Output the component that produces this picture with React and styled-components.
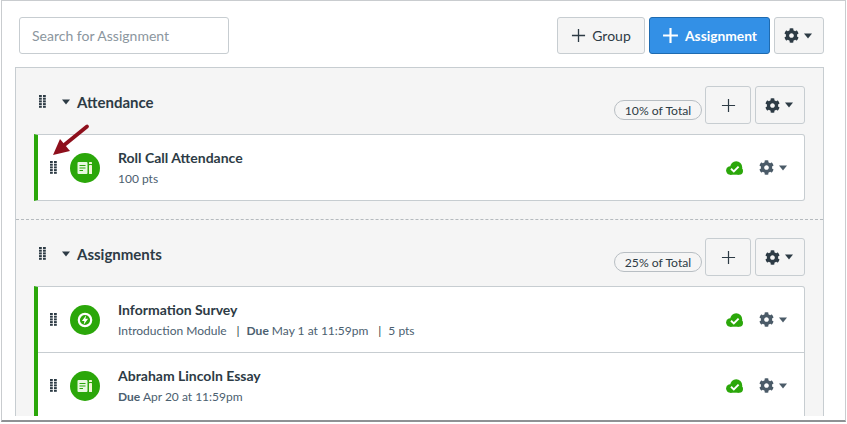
import React from "react";
import styled, { createGlobalStyle } from "styled-components";
import { FaCog } from "react-icons/fa";

const GlobalStyle = createGlobalStyle`
  html, body {
    margin: 0;
    background: #fff;
    font-family: Lato, "Noto Sans", sans-serif;
    color: #2d3b45;
  }
`;

const Plus = ({ size = 16, weight = 1.4 }) => (
  <svg width={size} height={size} viewBox="0 0 16 16">
    <path d="M8 1v14M1 8h14" stroke="currentColor" strokeWidth={weight} fill="none" />
  </svg>
);

const DragHandle = () => (
  <svg width="7" height="13" viewBox="0 0 7 13">
    {[0, 1, 2, 3, 4].map((r) =>
      [0, 1].map((c) => (
        <rect key={`${r}-${c}`} x={c * 4} y={r * 2.7} width="2.8" height="2" fill="#2d3b45" />
      ))
    )}
  </svg>
);

const Caret = ({ color = "#2d3b45" }) => (
  <svg width="8" height="6" viewBox="0 0 8 6">
    <path d="M0 .5h8L4 5.5z" fill={color} />
  </svg>
);

const AssignmentGlyph = () => (
  <svg width="16" height="14" viewBox="0 0 16 14">
    <rect x="0.5" y="1" width="10" height="12" rx="1" fill="#e8f8e0" />
    <path d="M2.5 4.5h6M2.5 7h6M2.5 9.5h3.5" stroke="#2ba70a" strokeWidth="1.1" />
    <rect x="12" y="4" width="3" height="9" rx="0.6" fill="#f1f7d8" />
    <rect x="12" y="1" width="3" height="2" rx="0.6" fill="#f1f7d8" />
  </svg>
);

const QuizGlyph = () => (
  <svg width="16" height="16" viewBox="0 0 16 16">
    <circle cx="8" cy="8" r="6.2" fill="none" stroke="#fff" strokeWidth="2.2" />
    <path d="M9.2 3.200 4.900 9h2.500l-.7 3.800 4.400-6H8.400z" fill="#fff" />
  </svg>
);

const Published = () => (
  <svg width="17" height="14" viewBox="0 0 17 14">
    <g fill="#2ba70a">
      <circle cx="10.200" cy="6.300" r="6" />
      <circle cx="4.300" cy="9.500" r="4.200" />
      <circle cx="13.300" cy="10" r="3.700" />
      <rect x="4" y="9" width="9" height="4.700" />
    </g>
    <path d="M5 7.800 7.800 10.400l4.800-4.800" stroke="#fff" strokeWidth="1.900" fill="none" />
  </svg>
);

const Arrow = () => (
  <ArrowWrap width="38" height="34" viewBox="0 0 38 34">
    <path d="M35 3.500 11 23" stroke="#8e0f1c" strokeWidth="3.800" strokeLinecap="round" fill="none" />
    <path d="M1 32 8 16 18 28z" fill="#8e0f1c" />
  </ArrowWrap>
);

const Row = ({ icon, title, children }) => (
  <ItemRow>
    <ItemHandle>
      <DragHandle />
    </ItemHandle>
    <IconCircle>{icon}</IconCircle>
    <ItemText>
      <ItemTitle>{title}</ItemTitle>
      <ItemMeta>{children}</ItemMeta>
    </ItemText>
    <PublishedSlot>
      <Published />
    </PublishedSlot>
    <RowGear>
      <FaCog size={15} />
      <Caret color="#4b5b68" />
    </RowGear>
  </ItemRow>
);

const Group = ({ name, weight, dashed, children }) => (
  <GroupBlock $dashed={dashed}>
    <GroupHeader>
      <GroupTitle>
        <DragHandle />
        <Caret />
        <GroupName>{name}</GroupName>
      </GroupTitle>
      <WeightPill>{weight} of Total</WeightPill>
      <SquareButton $width={46}>
        <Plus size={15} weight={1.3} />
      </SquareButton>
      <SquareButton $width={50} $gear>
        <FaCog size={15} />
        <Caret />
      </SquareButton>
    </GroupHeader>
    <ItemList>{children}</ItemList>
  </GroupBlock>
);

export default function App() {
  return (
    <>
      <GlobalStyle />
      <Page>
        <Window>
          <Toolbar>
            <SearchInput placeholder="Search for Assignment" readOnly />
            <ToolbarButtons>
              <SquareButton $width={88} $tall>
                <Plus size={15} />
                Group
              </SquareButton>
              <PrimaryButton>
                <Plus size={17} weight={2} />
                Assignment
              </PrimaryButton>
              <SquareButton $width={50} $tall $gear>
                <FaCog size={15} />
                <Caret />
              </SquareButton>
            </ToolbarButtons>
          </Toolbar>
          <Panel>
            <Group name="Attendance" weight="10%">
              <Row icon={<AssignmentGlyph />} title="Roll Call Attendance">
                100 pts
              </Row>
              <Arrow />
            </Group>
            <Group name="Assignments" weight="25%" dashed>
              <Row icon={<QuizGlyph />} title="Information Survey">
                Introduction Module<Sep>|</Sep>
                <b>Due</b>&nbsp;May 1 at 11:59pm<Sep>|</Sep>5 pts
              </Row>
              <Row icon={<AssignmentGlyph />} title="Abraham Lincoln Essay">
                <b>Due</b>&nbsp;Apr 20 at 11:59pm
              </Row>
            </Group>
          </Panel>
        </Window>
      </Page>
    </>
  );
}

const Page = styled.div`
  width: 847px;
  height: 424px;
  overflow: hidden;
  background: #fff;
`;

const Window = styled.div`
  box-sizing: border-box;
  width: 845px;
  height: 422px;
  margin-left: 1px;
  padding: 16px 20px 0 13px;
  overflow: hidden;
  background: #fff;
  border: 1px solid #c9cccf;
  border-bottom: 2px solid #8e9194;
`;

const Toolbar = styled.div`
  display: flex;
  justify-content: space-between;
  width: 805px;
  padding-left: 4px;
  margin-bottom: 13px;
`;

const SearchInput = styled.input`
  box-sizing: border-box;
  width: 210px;
  height: 37px;
  padding: 0 12px;
  border: 1px solid #c7cdd1;
  border-radius: 3px;
  outline: none;
  background: #fff;
  font: 14px Lato, sans-serif;
  color: #2d3b45;

  &::placeholder {
    color: #8b969e;
    opacity: 1;
  }
`;

const ToolbarButtons = styled.div`
  display: flex;
  gap: 4px;
`;

const SquareButton = styled.div`
  box-sizing: border-box;
  flex: none;
  display: flex;
  align-items: center;
  justify-content: center;
  gap: ${({ $gear }) => ($gear ? 5 : 6)}px;
  width: ${({ $width }) => $width}px;
  height: ${({ $tall }) => ($tall ? 37 : 38)}px;
  padding-right: ${({ $gear }) => ($gear ? 3 : 0)}px;
  background: #f5f5f5;
  border: 1px solid #c7cdd1;
  border-radius: 3px;
  font-size: 14px;
  color: #2d3b45;

  & + & {
    margin-left: ${({ $tall }) => ($tall ? 0 : 4)}px;
  }
`;

const PrimaryButton = styled.div`
  box-sizing: border-box;
  display: flex;
  align-items: center;
  justify-content: center;
  gap: 6px;
  width: 121px;
  height: 37px;
  background: #3390e6;
  border: 1px solid #1f6bb0;
  border-radius: 3px;
  font-size: 13.8px;
  font-weight: 700;
  color: #fff;
`;

/* the screenshot cuts the panel off just above the window's bottom edge */
const Panel = styled.div`
  box-sizing: border-box;
  width: 809px;
  height: 349px;
  overflow: hidden;
  background: #f5f5f5;
  border: 1px solid #c7cdd1;
  border-bottom: 0;
`;

const GroupBlock = styled.section`
  position: relative;
  padding: 18px 18px 18px;
  border-top: ${({ $dashed }) => ($dashed ? "1px dashed #b5babe" : "0")};
`;

const GroupHeader = styled.div`
  display: flex;
  align-items: center;
  height: 38px;
  margin-bottom: 10px;
`;

const GroupTitle = styled.div`
  flex: 1;
  display: flex;
  align-items: center;
  gap: 16px;
  padding: 0 0 7px 5px;
`;

const GroupName = styled.h2`
  margin: 0 0 0 -9px;
  font-size: 15px;
  font-weight: 700;
  color: #2d3b45;
`;

const WeightPill = styled.span`
  box-sizing: border-box;
  display: flex;
  align-items: center;
  justify-content: center;
  width: 88px;
  height: 20px;
  margin: 10px 3px 0 0;
  border: 1px solid #b8bec3;
  border-radius: 10px;
  font-size: 12.2px;
  color: #2d3b45;
`;

const ItemList = styled.div`
  background: #fff;
  border: 1px solid #c7cdd1;
  border-left: 4px solid #2ba70a;
  border-radius: 0 3px 3px 0;
`;

const ItemRow = styled.div`
  display: flex;
  align-items: center;
  height: 65px;

  & + & {
    border-top: 1px solid #c7cdd1;
  }
`;

const ItemHandle = styled.span`
  display: flex;
  margin: 0 13px 0 12px;
`;

const IconCircle = styled.span`
  flex: none;
  display: flex;
  align-items: center;
  justify-content: center;
  width: 30px;
  height: 30px;
  border-radius: 50%;
  background: #2ba70a;
`;

const ItemText = styled.div`
  flex: 1;
  margin-left: 18px;
`;

const ItemTitle = styled.div`
  font-size: 14px;
  font-weight: 700;
  line-height: 20px;
  color: #2d3b45;
`;

const ItemMeta = styled.div`
  margin-top: 2px;
  font-size: 12px;
  line-height: 18px;
  color: #4b6070;

  b {
    font-weight: 700;
  }
`;

const Sep = styled.span`
  margin: 0 7px 0 10px;
  color: #2d3b45;
`;

const PublishedSlot = styled.span`
  display: flex;
  margin-right: 16px;
`;

const RowGear = styled.span`
  display: flex;
  align-items: center;
  gap: 5px;
  margin-right: 17px;
  color: #4b5b68;
`;

const ArrowWrap = styled.svg`
  position: absolute;
  left: 36px;
  top: 55px;
`;
